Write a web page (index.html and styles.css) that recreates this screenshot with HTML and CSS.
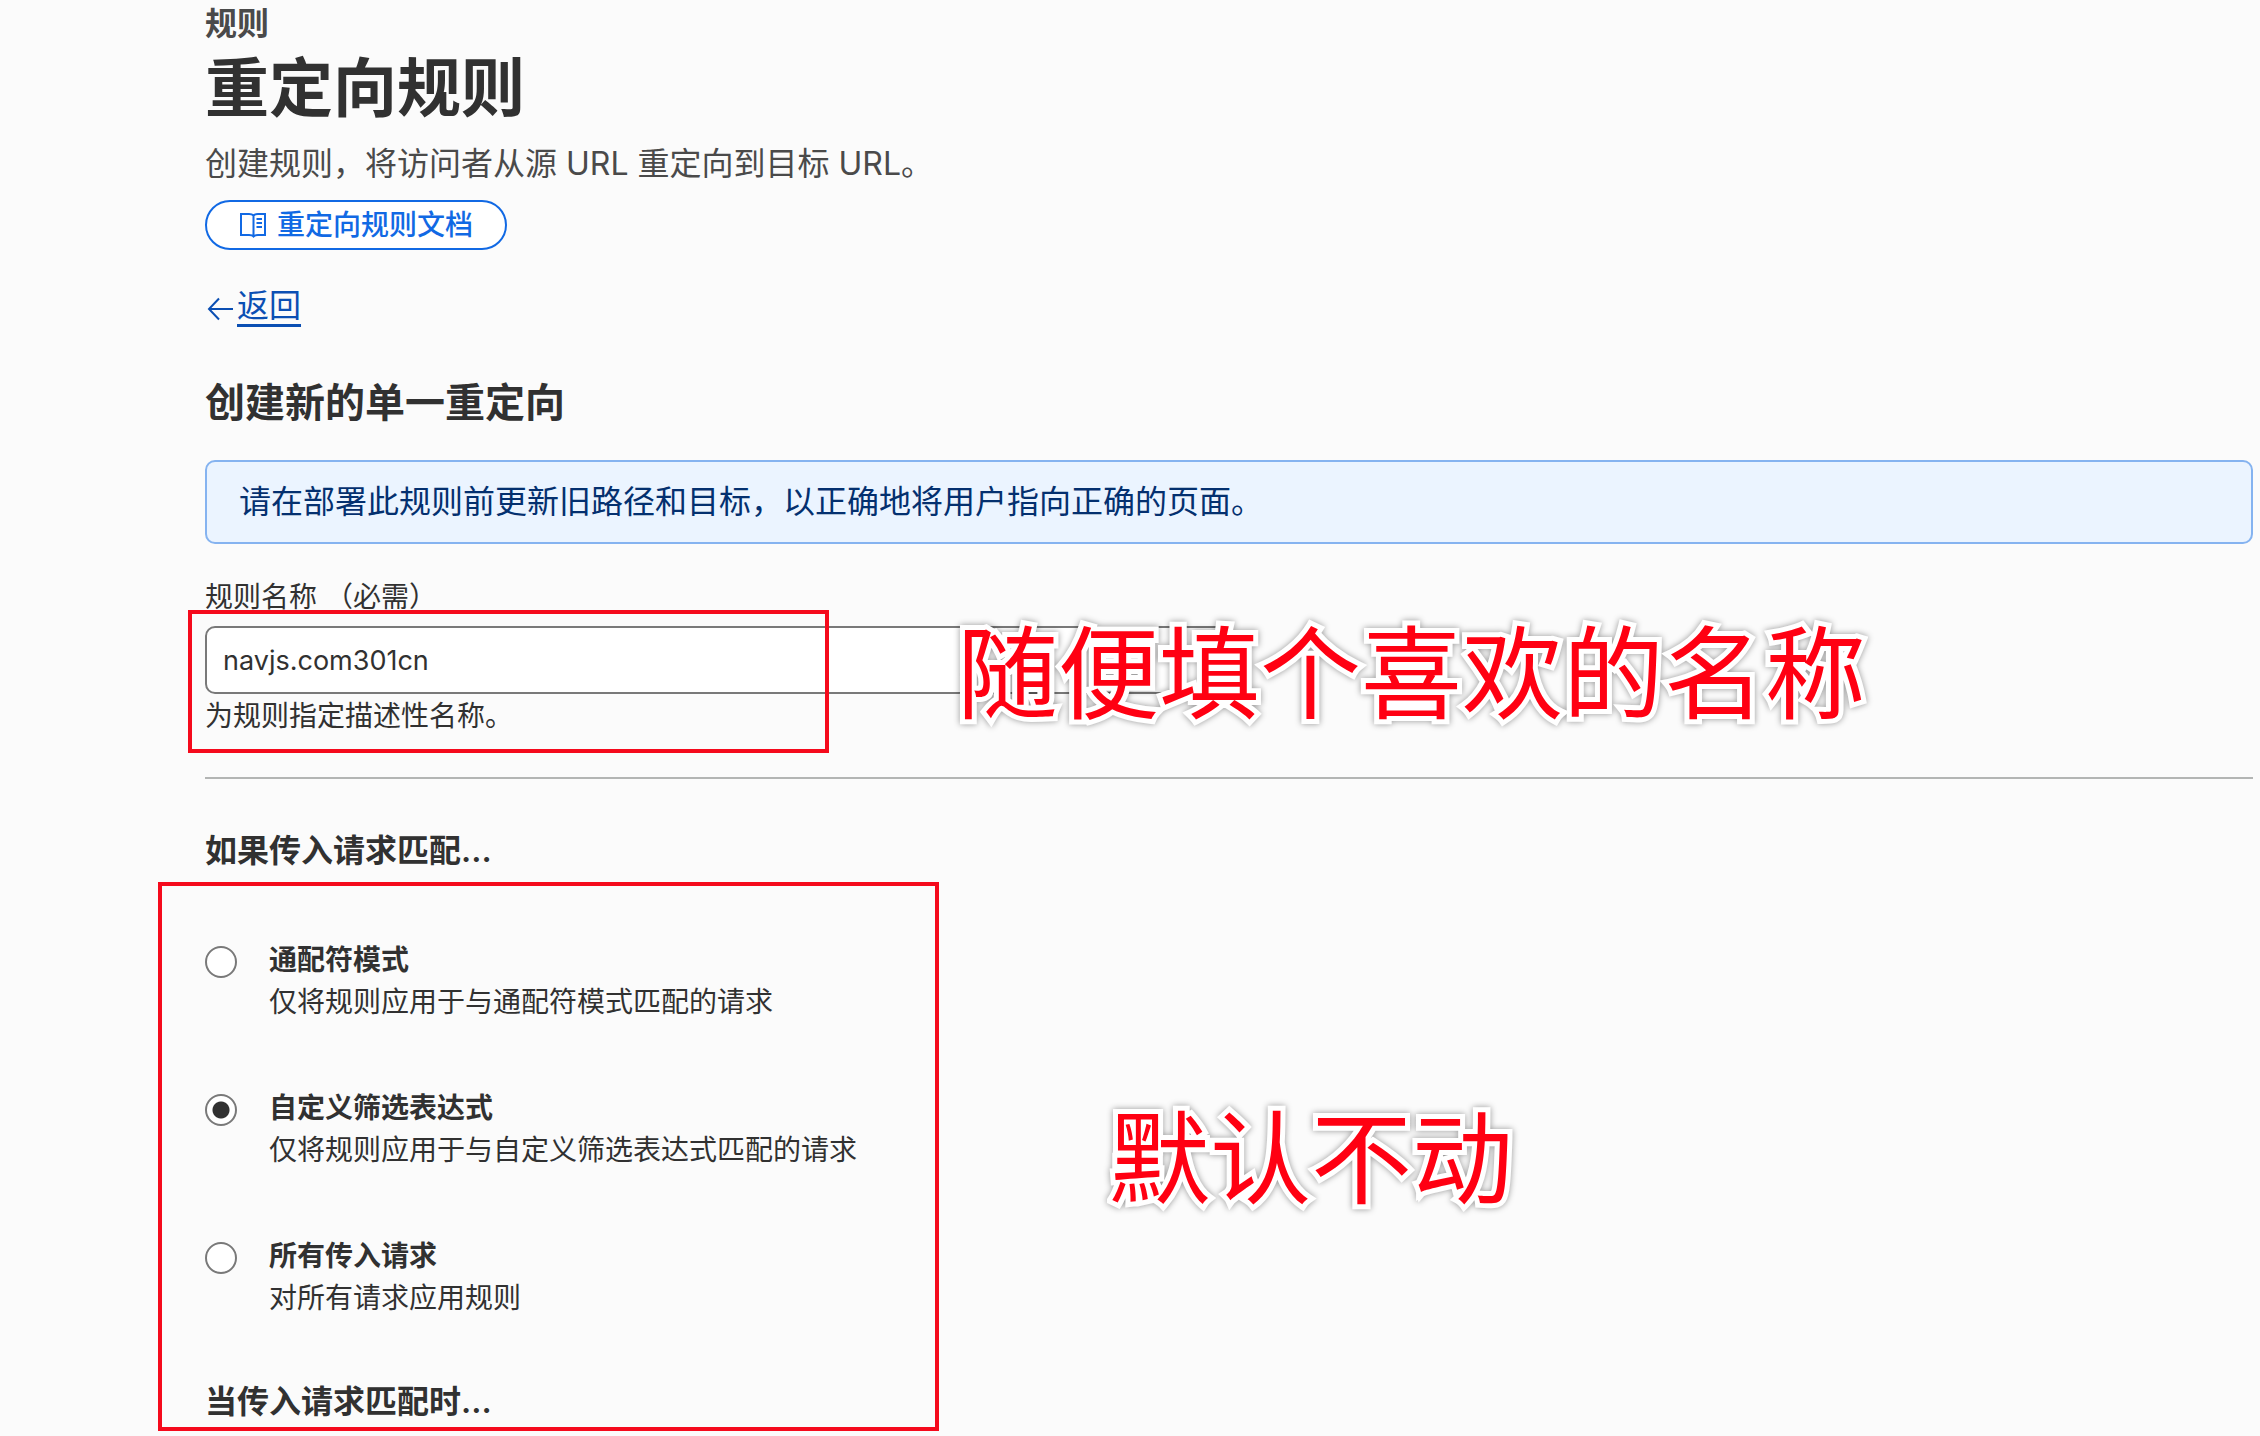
FILE: index.html
```html
<!DOCTYPE html>
<html lang="zh-CN">
<head>
  <meta charset="UTF-8" />
  <meta name="viewport" content="width=device-width, initial-scale=1.0" />
  <title>重定向规则</title>
  <link rel="stylesheet" href="styles.css">
</head>
<body>
  <main class="page">
    <header>
      <p class="crumb">规则</p>
      <h1>重定向规则</h1>
      <p class="intro">创建规则，将访问者从源 URL 重定向到目标 URL。</p>
      <a class="docs" href="#docs">
        <svg width="28" height="28" viewBox="0 0 28 28" fill="none" stroke="currentColor" stroke-width="2">
          <path d="M14.500 4.500C13 3 12 3 10 3H2v21h8c2 0 3.500 0 4.500 1.500C16 24 17 24 19 24h7V3h-7c-2 0-3 0-4.500 1.500zM14.500 4.500V26" />
          <path d="M17.500 8H23M17.500 12H23M17.500 16H23" />
        </svg>
        重定向规则文档
      </a>
    </header>

    <a class="back" href="#back">
      <svg width="32" height="32" viewBox="0 0 32 32" fill="none" stroke="currentColor" stroke-width="2">
        <path d="M28 19H4M14 8.500L4 19l10 10.500" />
      </svg>
      <span>返回</span>
    </a>

    <form>
      <h2>创建新的单一重定向</h2>
      <div class="notice">请在部署此规则前更新旧路径和目标，以正确地将用户指向正确的页面。</div>

      <section class="name-field">
        <label for="ruleName">规则名称 （必需）</label>
        <input type="text" id="ruleName" value="navjs.com301cn" aria-describedby="nameHelp" />
        <p id="nameHelp">为规则指定描述性名称。</p>
        <div class="mark mark-name"></div>
        <div class="note note-name">随便填个喜欢的名称</div>
      </section>

      <hr>

      <section class="match">
        <h3>如果传入请求匹配...</h3>
        <div class="options">
          <div class="option">
            <input type="radio" name="match" id="wildcard" />
            <label for="wildcard"><strong>通配符模式</strong><span>仅将规则应用于与通配符模式匹配的请求</span></label>
          </div>
          <div class="option">
            <input type="radio" name="match" id="custom" checked />
            <label for="custom"><strong>自定义筛选表达式</strong><span>仅将规则应用于与自定义筛选表达式匹配的请求</span></label>
          </div>
          <div class="option">
            <input type="radio" name="match" id="all" />
            <label for="all"><strong>所有传入请求</strong><span>对所有请求应用规则</span></label>
          </div>
        </div>
        <h3>当传入请求匹配时...</h3>
        <div class="mark mark-match"></div>
        <div class="note note-match">默认不动</div>
      </section>
    </form>
  </main>
</body>
</html>
```
FILE: styles.css
```css
* { box-sizing: border-box; }
body { margin: 0; background: #fbfbfb; color: #313131; font-family: Inter, "Noto Sans CJK SC", sans-serif; font-size: 28px; line-height: 40px; }
h1, h2, h3, p { margin: 0; }
.page { padding: 0 7px 8px 205px; }

.crumb { font-size: 32px; line-height: 48px; font-weight: 600; color: #4a4a4a; }
h1 { font-size: 64px; line-height: 80px; font-weight: 600; }
.intro { margin-top: 12px; font-size: 32px; line-height: 48px; color: #4a4a4a; }
.docs { display: flex; align-items: center; gap: 10px; width: fit-content; height: 50px; margin-top: 12px; padding: 0 32px; border: 2px solid #1169e4; border-radius: 25px; background: #fff; color: #1169e4; font-weight: 500; text-decoration: none; }

.back { display: flex; align-items: center; width: fit-content; margin-top: 32px; color: #0b4fb3; font-size: 32px; line-height: 48px; text-decoration: none; }
.back span { text-decoration: underline 3px; text-underline-offset: 7px; text-decoration-skip-ink: none; }

h2 { margin: 45px 0 29px; font-size: 40px; line-height: 56px; font-weight: 600; }
.notice { padding: 16px 32px; border: 2px solid #85b3f0; border-radius: 10px; background: #ebf4ff; color: #04306f; font-size: 32px; line-height: 48px; }

.name-field { position: relative; margin-top: 33px; }
.name-field label { display: block; }
.name-field input { display: block; width: 50%; height: 68px; margin: 9px 0 2px; padding: 0 16px; border: 2px solid #797979; border-radius: 10px; background: #fff; color: #313131; font: inherit; font-size: 27px; }
hr { height: 2px; margin: 41px 0 48px; border: 0; background: #b3b5b4; }

.match { position: relative; }
h3 { font-size: 32px; line-height: 48px; font-weight: 600; }
.options { display: flex; flex-direction: column; gap: 64px; margin: 64px 0 59px; }
.option { display: flex; align-items: flex-start; gap: 32px; }
.option input { appearance: none; width: 32px; height: 32px; margin: 7px 0 0; border: 2px solid #797979; border-radius: 50%; background: #fff; }
.option input:checked { background: radial-gradient(circle, #313131 8px, #fff 9px); }
.option label { display: flex; flex-direction: column; line-height: 42px; }
.option strong { font-weight: 600; }

/* red boxes and notes lie over the form */
.mark { position: absolute; border: 4px solid #f50a1c; pointer-events: none; }
.mark-name { top: 33px; left: -17px; width: 641px; height: 143px; }
.mark-match { top: 55px; left: -47px; width: 781px; height: 549px; }
.note { position: absolute; color: #ff0012; font-family: "Noto Sans CJK SC", sans-serif; font-size: 101px; line-height: 120px; white-space: nowrap; -webkit-text-stroke: 10px #fff; paint-order: stroke fill; filter: drop-shadow(0 0 3px rgba(0, 0, 0, 0.4)); }
.note-name { top: 30px; left: 752px; }
.note-match { top: 265px; left: 904px; }
```
